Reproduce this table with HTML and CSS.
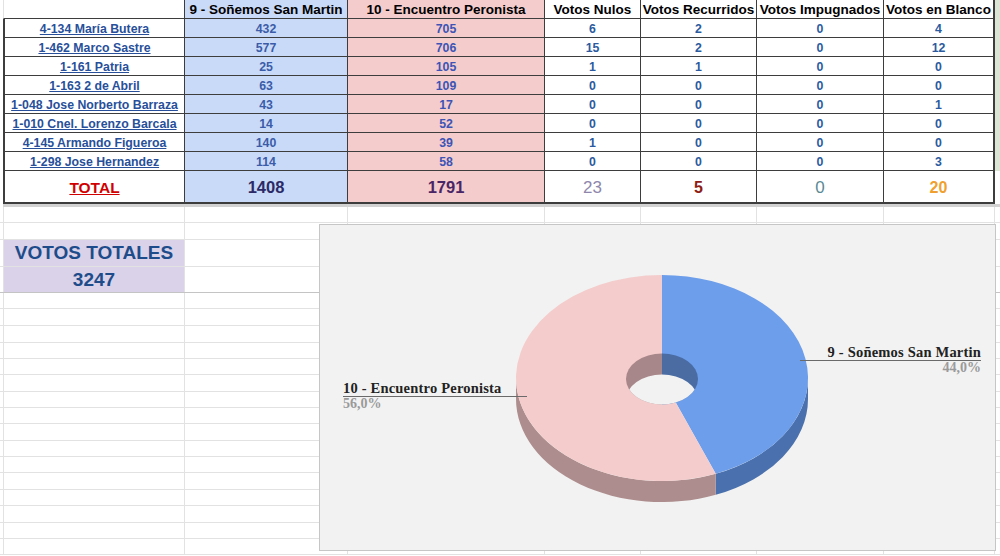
FILE: index.html
```html
<!DOCTYPE html>
<html lang="es">
<head>
<meta charset="utf-8">
<title>Resultados por escuela</title>
<link rel="stylesheet" href="styles.css">
</head>
<body>
<div class="top">
  <div class="results">
    <div class="c h blank"></div>
    <div class="c h b">9 - Soñemos San Martin</div>
    <div class="c h p">10 - Encuentro Peronista</div>
    <div class="c h">Votos Nulos</div>
    <div class="c h">Votos Recurridos</div>
    <div class="c h">Votos Impugnados</div>
    <div class="c h last">Votos en Blanco</div>

    <div class="c name"><span class="link">4-134 María Butera</span></div>
    <div class="c d b">432</div><div class="c d p">705</div><div class="c d n">6</div><div class="c d n">2</div><div class="c d n">0</div><div class="c d n last">4</div>

    <div class="c name"><span class="link">1-462 Marco Sastre</span></div>
    <div class="c d b">577</div><div class="c d p">706</div><div class="c d n">15</div><div class="c d n">2</div><div class="c d n">0</div><div class="c d n last">12</div>

    <div class="c name"><span class="link">1-161 Patria</span></div>
    <div class="c d b">25</div><div class="c d p">105</div><div class="c d n">1</div><div class="c d n">1</div><div class="c d n">0</div><div class="c d n last">0</div>

    <div class="c name"><span class="link">1-163 2 de Abril</span></div>
    <div class="c d b">63</div><div class="c d p">109</div><div class="c d n">0</div><div class="c d n">0</div><div class="c d n">0</div><div class="c d n last">0</div>

    <div class="c name"><span class="link">1-048 Jose Norberto Barraza</span></div>
    <div class="c d b">43</div><div class="c d p">17</div><div class="c d n">0</div><div class="c d n">0</div><div class="c d n">0</div><div class="c d n last">1</div>

    <div class="c name"><span class="link">1-010 Cnel. Lorenzo Barcala</span></div>
    <div class="c d b">14</div><div class="c d p">52</div><div class="c d n">0</div><div class="c d n">0</div><div class="c d n">0</div><div class="c d n last">0</div>

    <div class="c name"><span class="link">4-145 Armando Figueroa</span></div>
    <div class="c d b">140</div><div class="c d p">39</div><div class="c d n">1</div><div class="c d n">0</div><div class="c d n">0</div><div class="c d n last">0</div>

    <div class="c name"><span class="link">1-298 Jose Hernandez</span></div>
    <div class="c d b">114</div><div class="c d p">58</div><div class="c d n">0</div><div class="c d n">0</div><div class="c d n">0</div><div class="c d n last">3</div>

    <div class="c name tot"><span class="total-label">TOTAL</span></div>
    <div class="c tot b t-sm">1408</div>
    <div class="c tot p t-ep">1791</div>
    <div class="c tot t-nul">23</div>
    <div class="c tot t-rec">5</div>
    <div class="c tot t-imp">0</div>
    <div class="c tot last t-bla">20</div>
  </div>
  <div class="edge"></div>
</div>
<div class="divider"></div>

<div class="sheet">
  <div class="row r16"></div>
  <div class="row r17"></div>
  <div class="row r27"><div class="vt vt-label">VOTOS TOTALES</div></div>
  <div class="row r26 vt-end"><div class="vt vt-num">3247</div></div>
  <div class="row r16"></div>
  <div class="row r17"></div>
  <div class="row r17"></div>
  <div class="row r16"></div>
  <div class="row r16"></div>
  <div class="row r17"></div>
  <div class="row r16"></div>
  <div class="row r16"></div>
  <div class="row r17"></div>
  <div class="row r16"></div>
  <div class="row r16"></div>
  <div class="row r17"></div>
  <div class="row r16"></div>
  <div class="row r17"></div>
  <div class="row r16"></div>
  <div class="row r16"></div>
</div>

<div class="chart">
  <svg class="donut" width="675" height="325" viewBox="0 0 675 325" xmlns="http://www.w3.org/2000/svg">
    <defs>
      <clipPath id="hole">
        <ellipse cx="342" cy="154" rx="36" ry="25.5"/>
      </clipPath>
    </defs>
    <!-- outer walls -->
    <path d="M488 153 A146 103 0 0 1 395.74 248.77 L395.74 269.77 A146 103 0 0 0 488 174 Z" fill="#4a71ad"/>
    <path d="M395.74 248.77 A146 103 0 0 1 196 153 L196 174 A146 103 0 0 0 395.74 269.77 Z" fill="#ad8d8d"/>
    <!-- top faces -->
    <path d="M342 153 L342 50 A146 103 0 0 1 395.74 248.77 Z" fill="#6d9eeb"/>
    <path d="M342 153 L395.74 248.77 A146 103 0 1 1 342 50 Z" fill="#f4cccc"/>
    <!-- hole -->
    <g clip-path="url(#hole)">
      <rect x="300" y="120" width="42" height="70" fill="#a8878a"/>
      <rect x="342" y="120" width="42" height="70" fill="#4a6ca3"/>
      <ellipse cx="342" cy="175" rx="36" ry="25.5" fill="#f2f2f2"/>
    </g>
    <!-- labels -->
    <line x1="23" y1="171.5" x2="207" y2="171.5" stroke="#6a6a6a" stroke-width="1"/>
    <text class="lbl" x="23" y="168">10 - Encuentro Peronista</text>
    <text class="pct" x="23" y="183">56,0%</text>
    <line x1="480" y1="135.5" x2="661" y2="135.5" stroke="#6a6a6a" stroke-width="1"/>
    <text class="lbl" x="661" y="132" text-anchor="end">9 - Soñemos San Martin</text>
    <text class="pct" x="661" y="147" text-anchor="end">44,0%</text>
  </svg>
</div>
</body>
</html>
```

FILE: styles.css
```css
* { box-sizing: border-box; }

html, body {
  margin: 0;
  padding: 0;
}

body {
  position: relative;
  width: 1000px;
  height: 556px;
  overflow: hidden;
  background: #ffffff;
  font-family: "Liberation Sans", Arial, sans-serif;
}

/* ---------- results table ---------- */
.top {
  display: flex;
  padding-left: 3px;
}

.results {
  display: grid;
  grid-template-columns: 182px 163px 197px 96px 116px 127px 111px;
  grid-template-rows: repeat(9, 19px) 33px;
  width: 992px;
  flex: none;
}

.c {
  display: flex;
  align-items: center;
  justify-content: center;
  border-right: 1px solid #3d3d3d;
  border-bottom: 1px solid #3d3d3d;
  font-weight: bold;
  font-size: 12.3px;
  white-space: nowrap;
  padding-top: 1px;
}

.blank {
  border-left: 1px solid #e2e2e2;
}

.name {
  border-left: 2px solid #3d3d3d;
  color: #28509a;
}

.link {
  text-decoration: underline;
}

.last {
  border-right-width: 2px;
}

.b {
  background: #c9daf8;
  color: #3b5ca8;
}

.p {
  background: #f4cccc;
  color: #3c54b5;
}

.n {
  color: #2b5b9e;
}

.results .h {
  font-size: 13.5px;
  color: #000000;
}

.tot {
  border-bottom-width: 2px;
  font-size: 16px;
  padding-top: 2px;
}

.total-label {
  color: #d00000;
  font-size: 15.5px;
  text-decoration: underline;
}

.t-sm { color: #2c2a66; font-size: 16.5px; }
.t-ep { color: #4a2566; font-size: 16.5px; }
.t-nul { color: #8f87ab; font-weight: normal; font-size: 17px; }
.t-rec { color: #8e1c14; }
.t-imp { color: #5b8a95; font-weight: normal; font-size: 17px; }
.t-bla { color: #f0a02e; }

.edge {
  flex: 1;
  height: 171px;
  background: #dbe6d5;
}

.divider {
  height: 3px;
  margin-left: 3px;
  background: #d2d2d2;
}

/* ---------- spreadsheet grid below ---------- */
.sheet {
  background-image: linear-gradient(90deg,
    transparent 3px, #e2e2e2 3px 4px,
    transparent 4px 184px, #e2e2e2 184px 185px,
    transparent 185px 347px, #e2e2e2 347px 348px,
    transparent 348px 544px, #e2e2e2 544px 545px,
    transparent 545px 640px, #e2e2e2 640px 641px,
    transparent 641px 756px, #e2e2e2 756px 757px,
    transparent 757px 883px, #e2e2e2 883px 884px,
    transparent 884px 994px, #e2e2e2 994px 995px,
    transparent 995px);
}

.row {
  display: flex;
  border-bottom: 1px solid #e2e2e2;
}

.r16 { height: 16px; }
.r17 { height: 17px; }
.r26 { height: 26px; }
.r27 { height: 27px; }

.vt-end {
  border-bottom-color: #c4c4c4;
}

.vt {
  width: 180px;
  margin-left: 4px;
  background: #d9d2e9;
  display: flex;
  align-items: center;
  justify-content: center;
  font-weight: bold;
  font-size: 19px;
  color: #1e4c8a;
}

/* ---------- chart ---------- */
.chart {
  position: absolute;
  left: 319px;
  top: 224px;
  width: 677px;
  height: 327px;
  background: #f2f2f2;
  border: 1px solid #c6c6c6;
}

.donut {
  display: block;
}

.lbl {
  font-family: "Liberation Serif", "Times New Roman", serif;
  font-weight: bold;
  font-size: 14.5px;
  letter-spacing: 0.2px;
  fill: #222222;
}

.pct {
  font-family: "Liberation Serif", "Times New Roman", serif;
  font-weight: bold;
  font-size: 14px;
  fill: #9a9a9a;
}
```
